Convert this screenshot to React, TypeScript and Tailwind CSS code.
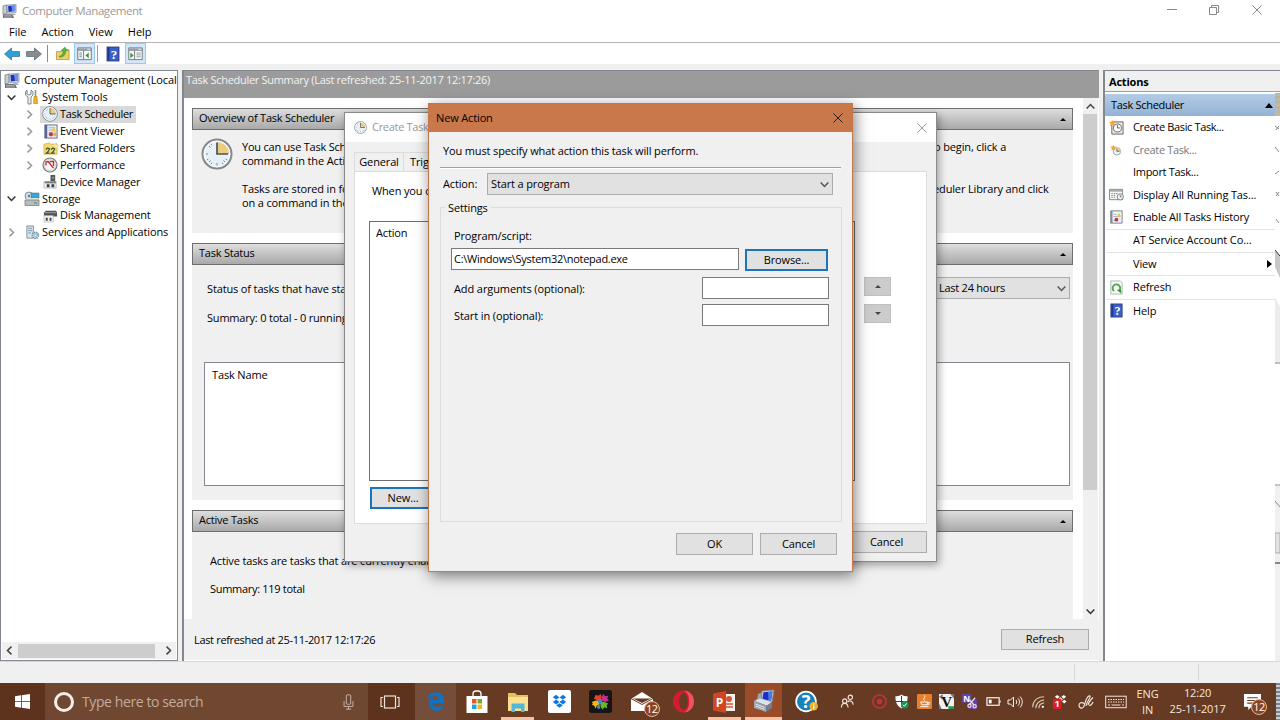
import clsx from "clsx"
import { ReactNode } from "react"
import { FaEdgeLegacy } from "react-icons/fa"

interface IconProps {
    className?: string
}

interface SvgProps extends IconProps {
    children: ReactNode
    size?: number
}

const Svg = ({ children, className, size = 16 }: SvgProps) => (
    <svg viewBox={`0 0 ${size} ${size}`} className={clsx("shrink-0", className)} fill="none">{children}</svg>
)

const ComputerIcon = ({ className }: IconProps) => (
    <Svg className={className}>
        <path d="M1 2l4-1v9l-4 1z" fill="#c9cdd3" stroke="#6f767e" strokeWidth=".7" />
        <path d="M5 1l10-.5v8.500L6 10z" fill="#d8dade" stroke="#70757d" strokeWidth=".6" />
        <path d="M6.500 2l7.500-.5v6L7 8.500z" fill="#1833bd" />
        <path d="M10 1.800l4-.3v6l-3 .4z" fill="#6d8fea" />
        <path d="M1 11h10l2 4H1z" fill="#6b7177" />
        <path d="M2 12.500h8M2 14h9" stroke="#c4c8cc" strokeWidth=".7" />
        <path d="M9 10.500l4-.5 2 1.500-4 .8z" fill="#a3a9af" />
    </Svg>
)

// larger, tilted version with the tool case in front
const ConsoleIcon = ({ className }: IconProps) => (
    <Svg className={className} size={24}>
        <path d="M10 2l12-1-2 12-11-1z" fill="#c8d0da" stroke="#7c8693" strokeWidth=".8" />
        <path d="M11.500 3.200l9-.8-1.500 9-8.700-.6z" fill="#1b2fc4" />
        <path d="M16 2.900l4.500-.5-1.500 9-2.500-.2z" fill="#4b78e8" />
        <path d="M6 5l3.500-1.500-.8 8L5 12.500z" fill="#9aa5b1" />
        <path d="M2 12l6-3 12 4-5 4z" fill="#dce2e8" stroke="#8b959f" strokeWidth=".6" />
        <path d="M2 12l12 5v6L2 19z" fill="#9ba6b1" />
        <path d="M14 17l6-4v6l-6 4z" fill="#727e8a" />
        <path d="M3.500 15l9 3.500M3.500 17l9 3.500" stroke="#e6ebef" strokeWidth=".9" />
    </Svg>
)

const ClockIcon = ({ className }: IconProps) => (
    <Svg className={className} size={32}>
        <circle cx="16" cy="16" r="14.500" fill="#dfeaf2" stroke="#85898c" strokeWidth="2" />
        <circle cx="16" cy="16" r="12.800" fill="#e7f0f6" stroke="#fff" strokeWidth="1" />
        <path d="M16 16V4a12 12 0 0 1 12 12z" fill="#eccd80" />
        <path d="M16 4.500V16h11" stroke="#48535e" strokeWidth="1.700" />
        <path d="M16 25v2.500M5 16h2M8 8l1.500 1.500M8 24l1.500-1.500M24 24l-1.500-1.500M10 5.800l.8 1.500M5.800 22l1.500-.8M22 26.200l-.8-1.500M10 26.200l.8-1.500M26.200 22l-1.500-.8" stroke="#6c8ba5" />
    </Svg>
)

const ToolsIcon = ({ className }: IconProps) => (
    <Svg className={className}>
        <path d="M3 1v4l2 1 2-1V1l2 2v3L7 8v7H4V8L1.500 6V3z" fill="#eef0f1" stroke="#777c80" strokeWidth=".9" />
        <path d="M11.500 1v7" stroke="#8b9095" strokeWidth="1.600" />
        <path d="M10 7.500h3l.6 7h-4z" fill="#eab22d" stroke="#b98412" strokeWidth=".6" />
    </Svg>
)

const EventIcon = ({ className }: IconProps) => (
    <Svg className={className}>
        <rect x="2" y="1" width="13" height="14" fill="#e9eef6" stroke="#616a86" />
        <path d="M2 1h2.500v14H2z" fill="#5a6595" />
        <path d="M6 4h7M6 6.500h7M6 9h4" stroke="#99a9c8" strokeWidth=".9" />
        <circle cx="8.500" cy="11" r="2.300" fill="#c23a43" />
        <path d="M11.500 3l2.500 5h-5z" fill="#f4cb36" />
        <path d="M11 9h3v4h-3z" fill="#e7b33f" />
    </Svg>
)

const SharedIcon = ({ className }: IconProps) => (
    <Svg className={className}>
        <path d="M1 3.500L7 2l1.500 1.500L15 3v11H1z" fill="#f3d977" stroke="#c9a640" strokeWidth=".7" />
        <path d="M3 9l2-1.500 2 1-1.500 2.500L3.500 13H7M8.500 9l2-1.500 2 1-1.500 2.500L9 13h3.500" stroke="#3e542f" strokeWidth="1.300" />
        <path d="M10 5l4-1v4" stroke="#fff3b8" />
    </Svg>
)

const PerfIcon = ({ className }: IconProps) => (
    <Svg className={className}>
        <circle cx="8" cy="8" r="7" fill="#fbf7f7" stroke="#777" strokeWidth="1.200" />
        <circle cx="8" cy="8" r="5.600" stroke="#bbb" strokeWidth=".6" />
        <path d="M4 8.500V5l2-.5 5.500 6.500M7.500 4.500h4V9" stroke="#bd2f35" strokeWidth="1.300" />
    </Svg>
)

const DeviceIcon = ({ className }: IconProps) => (
    <Svg className={className}>
        <path d="M8 1h5v7H8z" fill="#53575a" />
        <path d="M10 3h1.500v2H10z" fill="#7fb88b" />
        <path d="M1 8h13v7H1z" fill="#f0f1f1" stroke="#a4a7a9" strokeWidth=".7" />
        <path d="M2 8h12v2H2z" fill="#777b7e" />
        <path d="M4 11h3v3H4zM9 11h3v3H9z" fill="#3c4043" />
    </Svg>
)

const StorageIcon = ({ className }: IconProps) => (
    <Svg className={className}>
        <circle cx="5" cy="5" r="4" fill="#d2dbe1" stroke="#6b7a83" strokeWidth=".8" />
        <circle cx="5" cy="5" r="1.200" fill="#698796" />
        <path d="M7 2h8v5H7z" fill="#38a7d6" stroke="#547a8d" strokeWidth=".6" />
        <path d="M1 9l2-2h11l1 2z" fill="#dfe3e5" />
        <path d="M1 9h14v5.500H1z" fill="#b5bcc0" stroke="#6d7478" strokeWidth=".7" />
        <path d="M10 12h3" stroke="#48a052" strokeWidth="1.200" />
    </Svg>
)

const DiskIcon = ({ className }: IconProps) => (
    <Svg className={className}>
        <path d="M1 5l2-2h11l1 2v4H1z" fill="#4f5356" />
        <path d="M2 5h12" stroke="#a8acaf" />
        <path d="M1 8h10v7H1z" fill="#f1f1f1" stroke="#a6a9ab" strokeWidth=".6" />
        <path d="M3 10.500h2v3H3zM7 10.500h2v3H7z" fill="#404447" />
    </Svg>
)

const ServicesIcon = ({ className }: IconProps) => (
    <Svg className={className}>
        <path d="M2 1h7v13H2z" fill="#dbe5ec" stroke="#77848e" strokeWidth=".9" />
        <path d="M3.500 3.500h4M3.500 6h4M3.500 8.500h3" stroke="#6f93ab" />
        <circle cx="11" cy="11" r="3.200" fill="#d5e5f2" stroke="#7096b3" strokeWidth="1.800" strokeDasharray="1.500 .7" />
        <circle cx="11" cy="11" r="1.200" fill="#fff" stroke="#7096b3" strokeWidth=".7" />
    </Svg>
)

const HelpIcon = ({ className }: IconProps) => (
    <Svg className={className}>
        <rect x="2" y="1" width="12" height="14" fill="#3a60ca" stroke="#23366f" strokeWidth=".8" />
        <path d="M2.500 1.500h2v13h-2z" fill="#1c3a8f" />
        <text x="9" y="12.500" textAnchor="middle" fontFamily="Liberation Serif, serif" fontWeight="bold" fontSize="13" fill="#fff">?</text>
    </Svg>
)

const NewTaskIcon = ({ className }: IconProps) => (
    <Svg className={className}>
        <path d="M3 2h12v13H3z" fill="#efebe6" stroke="#6a5f5a" />
        <circle cx="9" cy="8.500" r="4.300" fill="#fff" stroke="#7c7470" strokeWidth="1.100" />
        <path d="M9 5.500v3h2.500" stroke="#5b5552" />
        <path d="M3.500 0l1 2 2.300.3L5.200 4l.5 2.400-2.200-1.100L1.200 6.400 1.700 4 0 2.300 2.400 2z" fill="#f2a62c" />
    </Svg>
)

const SmallTaskIcon = ({ className }: IconProps) => (
    <Svg className={className}>
        <circle cx="9" cy="9.500" r="4.300" fill="#eaf0f5" stroke="#9aa3ab" />
        <path d="M9 9.500V5.500a4 4 0 0 1 4 4z" fill="#edcf80" />
        <path d="M9 6.500v3h3" stroke="#59636c" />
        <path d="M5 2l1 2 2.300.3L6.700 6l.5 2.400L5 7.300 2.700 8.400 3.200 6 1.500 4.300 4 4z" fill="#f2a62c" />
    </Svg>
)

const RunningIcon = ({ className }: IconProps) => (
    <Svg className={className}>
        <path d="M.5 2.500h14v11H.5z" fill="#f7f7f7" stroke="#7e8386" />
        <path d="M1 3h13v2H1z" fill="#a3a9ad" />
        <path d="M2.500 7h7M2.500 9h5M2.500 11h5" stroke="#7b848a" strokeDasharray="1.500 1" />
        <circle cx="12" cy="10.500" r="3.300" fill="#f3f3f3" stroke="#7e8386" />
        <path d="M12 8.500v2h1.500" stroke="#555" strokeWidth=".8" />
    </Svg>
)

const HistoryIcon = ({ className }: IconProps) => (
    <Svg className={className}>
        <path d="M2 1h13v14H2z" fill="#f2f5f8" stroke="#6b7482" />
        <path d="M2 1h2v14H2z" fill="#848da2" />
        <path d="M5 5h4M5 7.500h8M5 12h3" stroke="#9fb0c8" />
        <path d="M11.500 3l2.500 4.500H9z" fill="#f4cb36" />
        <circle cx="8.500" cy="11" r="2.200" fill="#c6323a" />
        <path d="M11 9.500h3v3h-3z" fill="#dbe7f4" />
    </Svg>
)

const RefreshIcon = ({ className }: IconProps) => (
    <Svg className={className}>
        <path d="M2 1h10l2 2v12H2z" fill="#f8fbf8" stroke="#9ba69c" strokeWidth=".8" />
        <path d="M5.500 11.800a4 4 0 1 1 5.500-.6" stroke="#47a951" strokeWidth="2" />
        <path d="M8 10.500h5v3.800z" fill="#35933f" />
    </Svg>
)

const ToolArrow = ({ className }: IconProps) => (
    <Svg className={className}>
        <path d="M.5 8L7.500 2v3.500H15.500v5H7.500V14z" fill="currentColor" stroke="#50656f" strokeWidth=".7" />
    </Svg>
)

const FolderUpIcon = ({ className }: IconProps) => (
    <Svg className={className}>
        <path d="M1.500 6h5l1-2H15v10.500H1.500z" fill="#f0d06c" stroke="#b08c31" strokeWidth=".8" />
        <path d="M4 11c4-1 4.500-3 4.500-6H6.500l4-4 3 4h-2c0 5-3 7-6.500 7z" fill="#55b33e" stroke="#3b8429" strokeWidth=".4" />
    </Svg>
)

const PaneIcon = ({ className, flip }: IconProps & { flip?: boolean }) => (
    <Svg className={className}>
        <path d="M.8 2h14.400v12.500H.8z" fill="#f8f8f8" stroke="#6f7880" />
        <path d="M1 2.500h14v2.800H1z" fill="#96a0a8" />
        <path d="M11 3.500h3" stroke="#e8edf1" />
        <path d="M7 5v9.500" stroke="#6f7880" />
        {flip ? <path d="M2.500 7L6 10l-3.500 3z" fill="#38973d" /> : <path d="M12.500 7L9 10l3.500 3z" fill="#38973d" />}
        {flip
            ? <path d="M9 7.500h4.500M9 9.500h4.500M9 11.500h4.500" stroke="#777f85" strokeWidth=".8" />
            : <path d="M2.500 7.500h2.700M2.500 9.500h2.700M2.500 11.500h2.700" stroke="#6685a0" />}
    </Svg>
)

const Chevron = ({ className }: IconProps) => (
    <Svg className={className} size={10}>
        <path d="M1.500 3.200L5 6.800l3.500-3.600" stroke="currentColor" strokeWidth="1.400" />
    </Svg>
)

const CloseIcon = ({ className }: IconProps) => (
    <Svg className={className} size={10}>
        <path d="M.5.5l9 9M9.500.5l-9 9" stroke="currentColor" strokeWidth="1" />
    </Svg>
)

const Button = ({ children, className, focused }: { children: ReactNode, className?: string, focused?: boolean }) => (
    <div className={clsx(
        "flex items-center justify-center bg-[#e1e1e1] shrink-0",
        focused ? "border-2 border-[#1c75bb]" : "border border-[#adadad]",
        className
    )}>{children}</div>
)

interface TreeItem {
    name: string
    icon: ReactNode
    level: number
    state?: "open" | "closed"
    selected?: boolean
}

const tree: TreeItem[] = [
    { name: "System Tools", icon: <ToolsIcon className="size-4" />, level: 0, state: "open" },
    { name: "Task Scheduler", icon: <ClockIcon className="size-4" />, level: 1, state: "closed", selected: true },
    { name: "Event Viewer", icon: <EventIcon className="size-[15px]" />, level: 1, state: "closed" },
    { name: "Shared Folders", icon: <SharedIcon className="size-[15px]" />, level: 1, state: "closed" },
    { name: "Performance", icon: <PerfIcon className="size-4" />, level: 1, state: "closed" },
    { name: "Device Manager", icon: <DeviceIcon className="size-[15px]" />, level: 1 },
    { name: "Storage", icon: <StorageIcon className="size-4" />, level: 0, state: "open" },
    { name: "Disk Management", icon: <DiskIcon className="size-[15px]" />, level: 1 },
    { name: "Services and Applications", icon: <ServicesIcon className="size-[15px]" />, level: 0, state: "closed" },
]

const Tree = () => (
    <div className="w-[178px] bg-white border border-[#828790] flex flex-col overflow-hidden whitespace-nowrap">
        <div className="flex items-center h-[17px] mt-px pl-[3px] tracking-[-0.1px]">
            <ComputerIcon className="size-4 mr-1" />Computer Management (Local
        </div>
        {tree.map(item => (
            <div key={item.name} className={clsx("flex items-center h-[16.9px]", item.level ? "pl-[23px]" : "pl-[5px]")}>
                <div className="w-4 shrink-0">
                    {item.state && <Chevron className={clsx("size-[11px]", item.state === "closed" ? "-rotate-90 text-[#9a9a9a]" : "text-[#333]")} />}
                </div>
                <div className={clsx("flex items-center h-full pr-[3px]", item.selected && "bg-[#d9d9d9] tracking-[-0.3px]")}>
                    <div className="w-5 flex justify-center shrink-0">{item.icon}</div>
                    {item.name}
                </div>
            </div>
        ))}
        <div className="mt-auto h-[17px] bg-[#f0f0f0] flex items-center mx-px mb-px">
            <Chevron className="size-[11px] rotate-90 text-[#444] ml-[2px]" />
            <div className="h-[14px] w-[137px] bg-[#cdcdcd] ml-[3px]" />
            <Chevron className="size-[11px] -rotate-90 text-[#444] ml-[8px]" />
        </div>
    </div>
)

const SectionHead = ({ children }: { children: ReactNode }) => (
    <div className="h-[22px] shrink-0 flex items-center justify-between px-[6px] border border-[#6e6e6e] bg-linear-to-b from-[#dedede] to-[#a9a9a9] tracking-[-0.22px]">
        <span className="-mt-px">{children}</span>
        <span className="border-x-[3px] border-x-transparent border-b-[3px] border-b-black" />
    </div>
)

const Summary = () => (
    <div className="w-[917px] ml-[4px] border-l-2 border-t border-[#828790] bg-[#f0f0f0] flex flex-col whitespace-nowrap">
        <div className="h-[27px] shrink-0 bg-[#9b9b9b] text-[#f4f4f4] pl-[2px] leading-[17px] tracking-[-0.3px]">
            Task Scheduler Summary (Last refreshed: 25-11-2017 12:17:26)
        </div>
        <div className="h-[521px] shrink-0 flex bg-white">
            <div className="w-[881px] ml-2 pt-[10px] flex flex-col">
                <SectionHead>Overview of Task Scheduler</SectionHead>
                <div className="h-[103px] shrink-0 bg-[#f0f0f0] flex pl-[9px] pt-[8px]">
                    <ClockIcon className="size-8" />
                    <div className="ml-[9px] w-[230px] leading-[14px] pt-[2px]">
                        <p className="tracking-[-0.22px]">You can use Task Scheduler to create</p>
                        <p>command in the Action menu.</p>
                        <p className="mt-[14px]">Tasks are stored in folders in the</p>
                        <p>on a command in the Action menu.</p>
                    </div>
                    <div className="ml-[464px] leading-[14px] pt-[2px]">
                        <p className="-ml-[2px]">o begin, click a</p>
                        <p className="mt-[28px] ml-[-3px]">eduler Library and click</p>
                    </div>
                </div>
                <div className="mt-[10px]"><SectionHead>Task Status</SectionHead></div>
                <div className="h-[235px] shrink-0 bg-[#f0f0f0] px-3 pt-[12px] pr-[3px]">
                    <div className="flex justify-between h-[22px]">
                        <span className="pl-[3px] leading-[24px]">Status of tasks that have started</span>
                        <div className="w-[140px] border border-[#adadad] bg-[#e1e1e1] flex items-center justify-between pl-[8px] pr-[2px] tracking-[-0.25px]">
                            Last 24 hours
                            <Chevron className="size-[11px] text-[#555]" />
                        </div>
                    </div>
                    <div className="pl-[3px] mt-[12px] leading-[14px] tracking-[-0.2px]">Summary: 0 total - 0 running, 0 succeeded</div>
                    <div className="h-[124px] mt-[37px] bg-white border border-[#828790] pl-[7px] pt-[4px]">Task Name</div>
                </div>
                <div className="mt-[10px]"><SectionHead>Active Tasks</SectionHead></div>
                <div className="grow bg-[#f0f0f0] pl-[18px] pt-[22px] leading-[14px]">
                    <p>Active tasks are tasks that are currently enabled</p>
                    <p className="mt-[14px] tracking-[-0.3px]">Summary: 119 total</p>
                </div>
            </div>
            <div className="w-[14px] ml-[10px] bg-[#f0f0f0] flex flex-col items-center">
                <Chevron className="size-[11px] rotate-180 text-[#444] mt-[3px]" />
                <div className="w-full h-[376px] mt-[2px] bg-[#cdcdcd]" />
                <Chevron className="size-[11px] text-[#333] mt-auto mb-[2px]" />
            </div>
            <div className="grow bg-[#f0f0f0] border-r border-[#fff]" />
        </div>
        <div className="grow flex items-center justify-between pl-[10px] pr-[10px] border-b border-white">
            <span className="tracking-[-0.33px] pt-px">Last refreshed at 25-11-2017 12:17:26</span>
            <Button className="w-[88px] h-[21px]">Refresh</Button>
        </div>
    </div>
)

const ActionRow = ({ icon, children, tall, className }: { icon?: ReactNode, children: ReactNode, tall?: boolean, className?: string }) => (
    <div className={clsx("flex items-center pr-[3px]", tall ? "h-[23.4px] pl-[2px] ml-px border-t border-[#e3e3e3]" : "h-[22.5px] pl-[3px]", className)}>
        <div className="w-4 mr-[9px] flex justify-center shrink-0">{icon}</div>
        {children}
    </div>
)

const Actions = () => (
    <div className="w-[177px] ml-[4px] bg-white border-l-2 border-t border-[#828790] whitespace-nowrap">
        <div className="h-[21px] bg-[#f0f0f0] border-b border-[#a0a0a0] pl-[4px] leading-[21px] font-bold tracking-[-0.2px]">Actions</div>
        <div className="h-[22px] mt-[2px] mr-[5px] flex items-center justify-between pl-[6px] pr-[2px] bg-linear-to-b from-[#b3cbe5] to-[#93b3d5] tracking-[-0.3px]">
            Task Scheduler
            <span className="border-x-[4.500px] border-x-transparent border-b-[5px] border-b-black" />
        </div>
        <ActionRow icon={<NewTaskIcon className="size-[15px]" />} className="tracking-[-0.35px]">Create Basic Task...</ActionRow>
        <ActionRow icon={<SmallTaskIcon className="size-[14px]" />} className="text-[#777] tracking-[-0.35px]">Create Task...</ActionRow>
        <ActionRow className="tracking-[-0.3px]">Import Task...</ActionRow>
        <ActionRow icon={<RunningIcon className="size-[15px]" />}>Display All Running Tas...</ActionRow>
        <ActionRow icon={<HistoryIcon className="size-[14px]" />} className="tracking-[-0.2px]">Enable All Tasks History</ActionRow>
        <div className="mr-[5px]">
            <ActionRow tall>AT Service Account Co...</ActionRow>
            <ActionRow tall>
                View
                <span className="ml-auto border-y-[4px] border-y-transparent border-l-[5px] border-l-black" />
            </ActionRow>
            <ActionRow tall icon={<RefreshIcon className="size-[15px]" />}>Refresh</ActionRow>
            <ActionRow tall icon={<HelpIcon className="size-[15px]" />}>Help</ActionRow>
        </div>
    </div>
)

const CreateTask = () => (
    <div className="absolute left-[344px] top-[112px] w-[593px] h-[450px] border border-[#8a8a8a] bg-[#f0f0f0] shadow-[2px_3px_8px_rgba(0,0,0,0.35)] whitespace-nowrap">
        <div className="h-[29px] bg-white flex items-center pl-[9px] pr-[9px] text-[#999]">
            <ClockIcon className="size-[13px] mr-[5px]" />
            <span className="tracking-[-0.3px]">Create Task</span>
            <CloseIcon className="size-[10px] ml-auto" />
        </div>
        <div className="flex mt-[10px] ml-[9px] h-[19px]">
            <div className="w-[50px] border border-b-0 border-[#dcdcdc] flex items-center justify-center">General</div>
            <div className="w-[60px] border border-l-0 border-b-0 border-[#dcdcdc] flex items-center pl-[6px]">Triggers</div>
        </div>
        <div className="mx-[9px] h-[353px] border border-[#dcdcdc] bg-white pl-[14px] pt-[11px]">
            <p className="pl-[3px] leading-[16px]">When you create</p>
            <div className="flex mt-[22px]">
                <div className="w-[486px] h-[260px] border border-[#6e6e6e] pl-[6px] pt-[3px]">Action</div>
                <div className="ml-[9px] mt-[56px] flex flex-col gap-[8px]">
                    <div className="w-[27px] h-[19px] bg-[#cccccc] border border-[#bfbfbf] flex items-center justify-center">
                        <span className="border-x-[3px] border-x-transparent border-b-[3px] border-b-[#444]" />
                    </div>
                    <div className="w-[27px] h-[19px] bg-[#cccccc] border border-[#bfbfbf] flex items-center justify-center">
                        <span className="border-x-[3px] border-x-transparent border-t-[3px] border-t-[#444]" />
                    </div>
                </div>
            </div>
            <Button focused className="w-[66px] h-[22px] mt-[6px] ml-px">New...</Button>
        </div>
        <Button className="w-[81px] h-[22px] mt-[7px] ml-auto mr-[9px]">Cancel</Button>
    </div>
)

const NewAction = () => (
    <div className="absolute left-[428px] top-[103px] w-[425px] h-[469px] border border-[#c5774b] bg-[#f0f0f0] shadow-[2px_4px_14px_rgba(0,0,0,0.5)] whitespace-nowrap flex flex-col">
        <div className="h-[28px] shrink-0 bg-[#c8784a] flex items-center pl-[7px] pr-[9px]">
            New Action
            <CloseIcon className="size-[10px] ml-auto text-[#222]" />
        </div>
        <p className="pl-[14px] mt-[11px] leading-[16px]">You must specify what action this task will perform.</p>
        <div className="mx-[11px] mt-[8px] border-t border-[#a0a0a0] border-b border-b-white" />
        <div className="flex items-center mt-[4px] pl-[14px] h-[22px]">
            <span className="w-[44px] pt-px">Action:</span>
            <div className="w-[346px] h-[22px] border border-[#adadad] bg-[#e1e1e1] flex items-center justify-between pl-[3px] pr-[2px]">
                Start a program
                <Chevron className="size-[11px] text-[#555]" />
            </div>
        </div>
        <fieldset className="ml-[11px] mt-[4px] w-[402px] h-[323px] border border-[#dcdcdc] pl-[10px]">
            <legend className="-ml-[6px] px-[3px] leading-[17px]">Settings</legend>
            <p className="pl-[3px] mt-[11px] leading-[17px]">Program/script:</p>
            <div className="flex mt-[4px]">
                <div className="w-[288px] h-[22px] border border-[#7a7a7a] bg-white flex items-center pl-[2px] tracking-[-0.28px]">C:\Windows\System32\notepad.exe</div>
                <Button focused className="w-[83px] h-[22px] ml-[6px] mt-px">Browse...</Button>
            </div>
            <div className="flex items-center justify-between mt-[6px] pl-[3px] pr-[12px]">
                <span className="pt-[2px] tracking-[-0.1px]">Add arguments (optional):</span>
                <div className="w-[127px] h-[22px] border border-[#7a7a7a] bg-white" />
            </div>
            <div className="flex items-center justify-between mt-[5px] pl-[3px] pr-[12px]">
                <span className="pt-[2px] tracking-[-0.1px]">Start in (optional):</span>
                <div className="w-[127px] h-[22px] border border-[#7a7a7a] bg-white" />
            </div>
        </fieldset>
        <div className="flex justify-end gap-[7px] pr-[15px] mt-[11px]">
            <Button className="w-[77px] h-[22px]">OK</Button>
            <Button className="w-[77px] h-[22px]">Cancel</Button>
        </div>
    </div>
)

const Badge = ({ className }: IconProps) => (
    <span className={clsx("absolute size-[16px] rounded-full bg-[#8b4423] border border-[#e5b595] text-white text-[11px] leading-[14px] text-center tracking-[-0.5px]", className)}>12</span>
)

const apps = [
    {
        name: "store",
        icon: (
            <svg viewBox="0 0 24 24" className="size-6" fill="none">
                <path d="M8 7V4a3 3 0 0 1 3-3h2a3 3 0 0 1 3 3v3" stroke="#fff" strokeWidth="1.300" />
                <path d="M1.500 6h21v17h-21z" fill="#fff" />
                <path d="M7 9h4.500v4.500H7z" fill="#ef5427" /><path d="M12.500 9H17v4.500h-4.500z" fill="#74ad2a" />
                <path d="M7 14.500h4.500V19H7z" fill="#1da4e2" /><path d="M12.500 14.500H17V19h-4.500z" fill="#f3b61d" />
            </svg>
        )
    },
    {
        name: "explorer",
        open: true,
        icon: (
            <svg viewBox="0 0 24 24" className="size-6">
                <path d="M2 3h7l2 2h11v16H2z" fill="#e6be5b" />
                <path d="M2 7h20v14H2z" fill="#fae092" />
                <path d="M5.500 13.500h13V22H15v-3.500H9V22H5.500z" fill="#53b8d8" />
            </svg>
        )
    },
    {
        name: "dropbox",
        icon: (
            <svg viewBox="0 0 24 24" className="size-[23px]">
                <rect width="24" height="24" rx="2" fill="#fff" />
                <path d="M8.500 5L5 7.500 8.500 10 12 7.700zM15.500 5L12 7.700 15.500 10 19 7.500zM8.500 10L5 12.500 8.500 15l3.500-2.500zM15.500 10L12 12.500l3.500 2.500 3.500-2.500zM8.500 16L12 13.800l3.500 2.200L12 18.500z" fill="#0f78df" />
            </svg>
        )
    },
    {
        name: "pieces",
        icon: (
            <svg viewBox="0 0 24 24" className="size-[23px]">
                <rect width="24" height="24" rx="2.500" fill="#151515" />
                <path d="M5 9l2-4 3 1 2-2 1 3-1 4-3 1-2-2z" fill="#e3412c" />
                <path d="M13 7l2-3 1.500 2.500L20 6l-1 3 2 2-4 1.500-4-1.500z" fill="#c33093" />
                <path d="M3 12.500l4-1.500 4 1 0 3-3 1.500-1 3-1.500-3L3 15.500l1-1.500z" fill="#efb81c" />
                <path d="M12 12.500l4 0 4 1.500-1.500 2 .5 3-3-1-2 2.500-2-3.500z" fill="#67b62f" />
                <path d="M10 10l3-.5 1 3-2.500 2.500-2-2z" fill="#388bd1" />
                <path d="M8 17l3-2 1 4-2.500 1z" fill="#388bd1" />
            </svg>
        )
    },
    {
        name: "mail",
        icon: (
            <div className="relative">
                <svg viewBox="0 0 24 24" className="size-6">
                    <path d="M1 9l11-7 11 7v12H1z" fill="#fff" />
                    <path d="M3 8.500h18L12 13z" fill="#663a23" />
                    <path d="M1 8.500l11 6 11-6" stroke="#663a23" strokeWidth="1" fill="none" />
                </svg>
                <Badge className="left-[14px] top-[11px]" />
            </div>
        )
    },
    {
        name: "opera",
        icon: (
            <svg viewBox="0 0 24 24" className="size-[23px]">
                <ellipse cx="12" cy="12" rx="11" ry="11.500" fill="#d71b2e" />
                <path d="M12 .5c6 0 11 5 11 11.500S18 23.500 12 23.500c4-1 6-6 6-11.500S16 1.500 12 .5z" fill="#ef5360" />
                <ellipse cx="12" cy="12" rx="4.600" ry="8.500" fill="#663a23" />
            </svg>
        )
    },
    {
        name: "powerpoint",
        open: true,
        icon: (
            <svg viewBox="0 0 24 24" className="size-6">
                <path d="M11 4h12v17H11z" fill="#fbf1ec" />
                <circle cx="17" cy="9" r="3" fill="#d4563a" />
                <path d="M14 14h7M14 17h7" stroke="#d4563a" strokeWidth="1.300" />
                <path d="M1 3.500L14 1v22L1 20.500z" fill="#d14424" />
                <text x="7.500" y="16.500" textAnchor="middle" fontFamily="Open Sans, sans-serif" fontWeight="bold" fontSize="12" fill="#fff">P</text>
            </svg>
        )
    },
]

const TrayCell = ({ children }: { children: ReactNode }) => (
    <div className="w-[22.5px] shrink-0 flex justify-center items-center">{children}</div>
)

const Taskbar = () => (
    <div className="h-[37px] shrink-0 bg-[#663a23] flex text-[#f3e7df] whitespace-nowrap">
        <div className="w-[45px] bg-[#5e331e] flex items-center justify-center">
            <svg viewBox="0 0 16 16" className="size-[15px]" fill="#fff">
                <path d="M0 2.300l6.500-.9v6.200H0zM7.300 1.300L16 0v7.600H7.300zM0 8.400h6.500v6.200L0 13.700zM7.300 8.400H16V16l-8.700-1.300z" />
            </svg>
        </div>
        <div className="w-[323px] bg-[#704831] flex items-center pl-[9px] pr-[14px] text-[14px] tracking-[-0.4px] text-[#c3ab9d]">
            <div className="size-[20px] rounded-full border-[3px] border-[#f5eeea] mr-[8px]" />
            Type here to search
            <svg viewBox="0 0 12 18" className="w-[11px] h-[16px] ml-auto" fill="none" stroke="#cfbbae">
                <rect x="3.500" y="1" width="5" height="10.500" rx="1" />
                <path d="M1 8v6h10V8M6 14v3M3 17h6" />
            </svg>
        </div>
        <div className="w-[47px] pr-[4px] bg-[#5e331e] flex items-center justify-center">
            <svg viewBox="0 0 20 14" className="w-[20px] h-[14px]" fill="none" stroke="#efe3da" strokeWidth="1.200">
                <rect x="4.500" y="1" width="11" height="12" /><path d="M3 2.500H1v9h2M17 2.500h2v9h-2" />
            </svg>
        </div>
        <div className="w-[41px] bg-[#744e3b] flex items-center justify-center">
            <FaEdgeLegacy className="size-[19px] text-[#0c73c9]" />
        </div>
        {apps.map(app => (
            <div key={app.name} className="w-[41.3px] shrink-0 flex flex-col items-center pt-[7px]">
                <div className="h-[27px] flex items-start">{app.icon}</div>
                {app.open && <div className="w-[33px] h-[3px] bg-[#f7c2a1]" />}
            </div>
        ))}
        <div className="w-[37px] bg-[#994c27] flex flex-col items-center pt-[6px]">
            <ConsoleIcon className="size-[24px]" />
            <div className="w-full h-[3px] mt-auto bg-[#f7c2a1]" />
        </div>
        <div className="w-[48px] flex items-center justify-center">
            <svg viewBox="0 0 24 24" className="size-[23px]">
                <circle cx="11.500" cy="12" r="10.300" fill="#1584bd" stroke="#fff" strokeWidth="1.800" />
                <text x="11.500" y="19" textAnchor="middle" fontFamily="Open Sans, sans-serif" fontWeight="bold" fontSize="19" fill="#fff">?</text>
                <circle cx="19.500" cy="17" r="4.400" fill="#edaf2f" />
                <path d="M19.500 14v1.300M19.500 16.200v3.800" stroke="#fff" strokeWidth="1.300" />
            </svg>
        </div>
        <div className="w-[38px] pr-[3px] flex items-center justify-center">
            <svg viewBox="0 0 16 16" className="size-[15px]" fill="none" stroke="#f1e5dd" strokeWidth="1.200">
                <circle cx="5" cy="7.500" r="2.300" /><circle cx="11" cy="3.500" r="2.300" />
                <path d="M1.500 14.500c0-6 7-6 7 0M8 8.500c3-2.500 6-.5 6 3" />
            </svg>
        </div>
        <TrayCell>
            <svg viewBox="0 0 16 16" className="size-[15px]" fill="none" stroke="#c92e40" strokeWidth="1.700">
                <circle cx="8" cy="8" r="7" /><circle cx="8" cy="8" r="2" fill="#c92e40" />
            </svg>
        </TrayCell>
        <TrayCell>
            <svg viewBox="0 0 16 16" className="size-[15px]">
                <path d="M8 .5C6 2 3.500 2.500 1.500 2.500 1.500 9 3 12.500 8 15.500c5-3 6.500-6.500 6.500-13C12.500 2.500 10 2 8 .5z" fill="#fff" />
                <path d="M8 2v12M2 8h12" stroke="#333" /><circle cx="11.500" cy="11.500" r="4" fill="#1e9555" />
                <path d="M9.500 11.500l1.500 1.500 2.500-3" stroke="#fff" fill="none" />
            </svg>
        </TrayCell>
        <TrayCell>
            <svg viewBox="0 0 16 16" className="size-[15px]" fill="none" stroke="#fff">
                <rect width="16" height="16" rx="1" fill="#e6802e" stroke="none" />
                <path d="M8 1.500c2 2-2.500 3 0 5.500M4 8.500h7v3H5zM11 9h2v2h-2M3.500 13.500h9" />
            </svg>
        </TrayCell>
        <TrayCell>
            <svg viewBox="0 0 16 16" className="size-[15px]">
                <path d="M0 0h16v16H0z" fill="#f1f1f1" /><path d="M0 3l4-3v6zM12 0h4v5zM0 10l3 6H0z" fill="#777" />
                <text x="8" y="13.500" textAnchor="middle" fontFamily="Liberation Serif, serif" fontWeight="bold" fontSize="16" fill="#111">V</text>
                <path d="M10 13h6v3h-6z" fill="#289b48" />
            </svg>
        </TrayCell>
        <TrayCell>
            <svg viewBox="0 0 16 16" className="size-[15px]" fill="none" stroke="#e4ddf1" strokeWidth="1.400">
                <path d="M0 0h10v9H0zM7 6h9v10H7z" fill="#69429b" stroke="none" />
                <text x="5" y="8" textAnchor="middle" fontFamily="Open Sans, sans-serif" fontWeight="bold" fontSize="9" fill="#fff" stroke="none">N</text>
                <path d="M14 4l-6 7M8 6l5 6" /><circle cx="8" cy="12.500" r="1.700" /><circle cx="13.500" cy="13" r="1.700" />
            </svg>
        </TrayCell>
        <TrayCell>
            <svg viewBox="0 0 16 16" className="size-[15px] ml-[3px]" fill="none" stroke="#fff" strokeWidth="1.200">
                <rect x="1" y="4" width="13" height="8" /><path d="M15 7v2" /><path d="M3 6h3v4H3z" fill="#fff" stroke="none" />
            </svg>
        </TrayCell>
        <TrayCell>
            <svg viewBox="0 0 16 16" className="size-[16px] ml-[2px]" fill="none" stroke="#f5ece6">
                <path d="M1 6h2.500l3-3v10l-3-3H1zM9 6c1 1.300 1 2.700 0 4M11 4.300c2 2.300 2 5 0 7.400M13 2.500c3 3.300 3 7.700 0 11" />
            </svg>
        </TrayCell>
        <TrayCell>
            <svg viewBox="0 0 16 16" className="size-[14px] ml-[3px]" fill="none" stroke="#d8c3b6" strokeWidth="1.300">
                <path d="M2 14C2 7 7 2 15 2M5.500 15c0-5 4-9 9.500-9.500M9 15c0-3 2.500-5.500 6-6" /><circle cx="13.500" cy="13.500" r="1.300" fill="#fff" stroke="none" />
            </svg>
        </TrayCell>
        <TrayCell>
            <svg viewBox="0 0 16 16" className="size-[15px] ml-[2px]">
                <path d="M4.500 1l2.500 2-2.500 2L2 3zM11.500 1L14 3l-2.500 2L9 3zM12 6l2.500 2-2.500 2-2.500-2zM8 3.500l2.500 2L8 8 5.500 5.500z" fill="#fff" />
                <path d="M0 5h9v11H0z" fill="#dd1d28" />
                <text x="4.500" y="14" textAnchor="middle" fontFamily="Open Sans, sans-serif" fontWeight="bold" fontSize="10" fill="#fff">1</text>
            </svg>
        </TrayCell>
        <div className="w-[31px] flex items-center justify-center">
            <svg viewBox="0 0 16 16" className="size-[16px]" fill="none" stroke="#f1e5dd" strokeWidth="1.200">
                <path d="M6 9.500c-2.500-2-5-.5-5 2s3 3.500 4.500 1.500c1.500-2 1.500-6 3.500-9C10.500 1.500 12.500 1 12 3c-.5 2.500-3.500 5-4 9M15 3.500c-2 2-4.500 5-5 7.500M11 11c1.500 1 3-.5 4-3" />
            </svg>
        </div>
        <div className="w-[28px] flex items-center justify-center">
            <svg viewBox="0 0 22 14" className="w-[22px] h-[14px]" fill="none" stroke="#f1e5dd">
                <rect x=".7" y="1.200" width="20.500" height="11.500" />
                <path d="M3 4.500h16M3 7h16" strokeDasharray="1.500 1" /><path d="M3 10h2M6.500 10h9M17 10h2" />
            </svg>
        </div>
        <div className="w-[36px] flex flex-col items-center justify-center leading-[16px] tracking-normal">
            <span>ENG</span><span>IN</span>
        </div>
        <div className="w-[64px] flex flex-col items-center justify-center leading-[16px] -mt-px">
            <span>12:20</span><span>25-11-2017</span>
        </div>
        <div className="w-[46px] flex items-center justify-center">
            <div className="relative">
                <svg viewBox="0 0 16 16" className="size-[17px]">
                    <path d="M0 1h16v12H7l-3 3v-3H0z" fill="#fff" /><path d="M3 4.500h10M3 7h10M3 9.500h6" stroke="#663a23" />
                </svg>
                <Badge className="left-[7px] top-[6px]" />
            </div>
        </div>
        <div className="grow bg-[repeating-linear-gradient(to_bottom,#7a7f8a_0_2px,#c9cdd4_2px_4px)]" />
    </div>
)

// sliver of the window behind, showing at the right screen edge
const EdgeStrip = () => (
    <svg viewBox="0 0 5 590" className="absolute left-[1275px] top-[71px] w-[5px] h-[590px]" preserveAspectRatio="none">
        <path d="M0 22h5v23H0z" fill="#b9b9b0" />
        <path d="M0 26h5M0 31h5M0 36h5M0 41h5" stroke="#c9ac74" />
        <path d="M0 55l4 3M4 55l-3 4M0 76l4 5M0 103l4-3M1 121l3 4M4 121l-3 4M1 148l3 4" stroke="#888" />
        <path d="M0 179l5 6v22l-5-11z" fill="#c7c7c7" /><path d="M0 179l5 6" stroke="#333" />
        <path d="M0 226l5 10v55H0z" fill="#ececec" />
        <path d="M0 291h5v299H0z" fill="#f0f0f0" /><path d="M0 292h5" stroke="#888" />
        <path d="M0 293h5v122H0z" fill="#fff" />
        <path d="M0 414h5" stroke="#888" /><path d="M0 430l5 6" stroke="#888" />
        <path d="M0 462h5v20H0z" fill="#e1e1e1" stroke="#adadad" /><path d="M0 492h5" stroke="#888" strokeWidth="2" />
    </svg>
)

const App = () => (
    <div className="relative w-[1280px] h-[720px] overflow-hidden bg-[#f0f0f0] flex flex-col text-black text-[11px] tracking-[-0.14px] font-['Open_Sans','Noto_Sans',sans-serif]">
        <div className="h-[22px] shrink-0 bg-white flex items-center pl-[2px] text-[#999] text-[11.5px] tracking-[-0.42px]">
            <ComputerIcon className="size-[15px] mr-[5px]" />
            Computer Management
            <div className="ml-auto flex items-center h-full pr-[18px] -mt-[3px]">
                <div className="w-[10px] border-t border-[#888]" />
                <svg viewBox="0 0 10 10" className="size-[10px] ml-[32px]" fill="none" stroke="#888">
                    <path d="M.5 2.500h7v7h-7zM2.500 2.500v-2h7v7h-2" />
                </svg>
                <CloseIcon className="size-[10px] ml-[33px] text-[#888]" />
            </div>
        </div>
        <div className="h-[21px] shrink-0 bg-white border-b border-[#b5b5b5] flex items-center pl-[9px] gap-[15px] tracking-normal">
            <span>File</span><span>Action</span><span>View</span><span>Help</span>
        </div>
        <div className="h-[21px] shrink-0 bg-white flex items-center pl-[4px]">
            <ToolArrow className="size-4 text-[#27a4e0]" />
            <ToolArrow className="size-4 ml-[6px] rotate-180 text-[#8b8b8b]" />
            <div className="w-px h-[17px] ml-[5px] bg-[#8a8a8a]" />
            <FolderUpIcon className="size-[15px] ml-[7px]" />
            <div className="size-[21px] ml-[4px] border border-[#99cbf0] bg-[#d1e7f9] flex items-center justify-center"><PaneIcon className="size-[15px]" /></div>
            <div className="w-px h-[17px] ml-[2px] bg-[#a0a0a0]" />
            <HelpIcon className="size-[16px] ml-[7px]" />
            <div className="size-[21px] ml-[4px] border border-[#99cbf0] bg-[#d1e7f9] flex items-center justify-center"><PaneIcon flip className="size-[15px]" /></div>
        </div>
        <div className="h-[597px] pt-[6px] shrink-0 flex">
            <Tree />
            <Summary />
            <Actions />
        </div>
        <div className="h-[22px] shrink-0 border-t border-[#d7d7d7] flex">
            <div className="w-[1075px] border-r border-[#d7d7d7] my-[2px]" />
            <div className="w-[124px] border-r border-[#d7d7d7] my-[2px]" />
        </div>
        <Taskbar />
        <EdgeStrip />
        <CreateTask />
        <NewAction />
    </div>
)

export default App
